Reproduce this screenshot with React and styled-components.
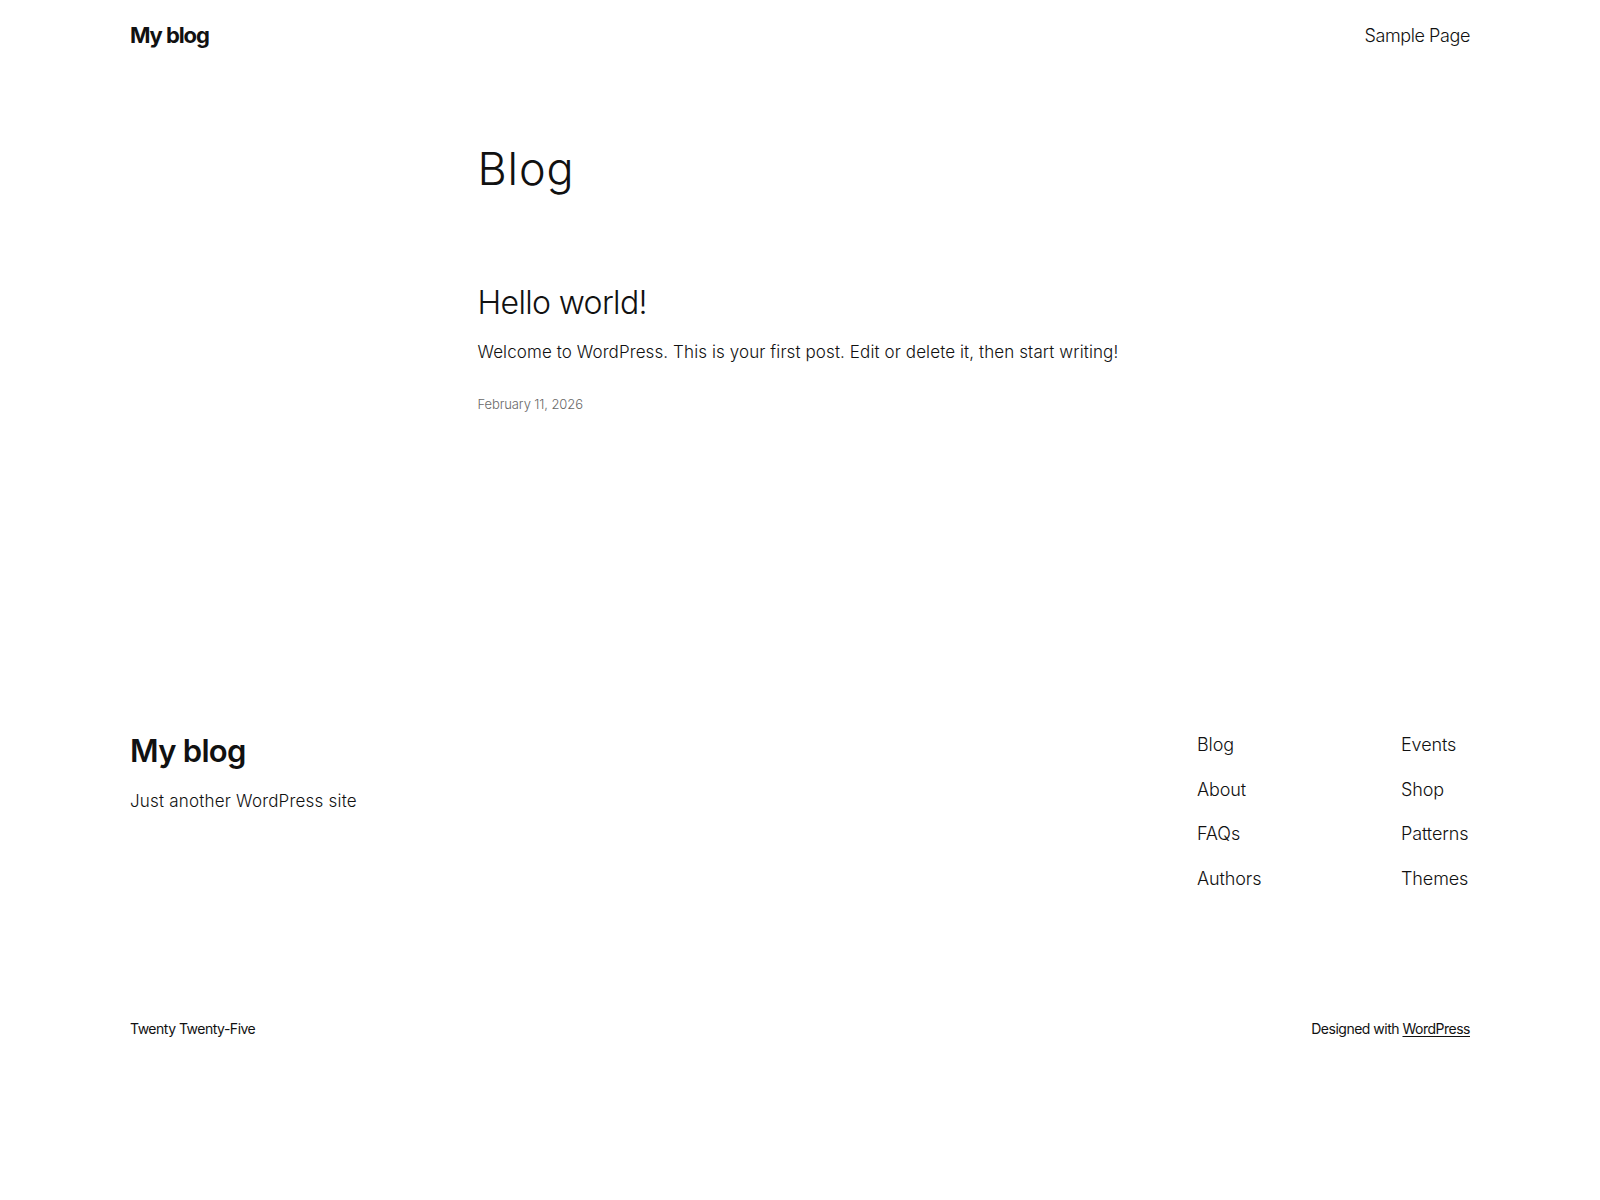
import styled, { createGlobalStyle } from 'styled-components';

const GlobalStyle = createGlobalStyle`
  html, body {
    margin: 0;
    padding: 0;
    background: #ffffff;
  }
  body {
    font-family: Inter, "Noto Sans", "Liberation Sans", sans-serif;
    font-weight: 300;
    color: #111111;
    -webkit-font-smoothing: antialiased;
  }
  a {
    color: inherit;
    text-decoration: none;
  }
`;

const Page = styled.div`
  min-height: 1200px;
  display: flex;
  flex-direction: column;
`;

const Header = styled.header`
  width: 1340px;
  margin: 0 auto;
  padding: 20px 0;
  display: flex;
  justify-content: space-between;
  align-items: center;
`;

const SiteTitle = styled.a`
  font-size: 22px;
  line-height: 30px;
  font-weight: 700;
  letter-spacing: -1.1px;
`;

const HeaderLink = styled.a`
  font-size: 18px;
  line-height: 25px;
  font-weight: 300;
  letter-spacing: -0.4px;
`;

const Main = styled.main`
  width: 645px;
  margin: 75px auto 0;
`;

const PageTitle = styled.h1`
  margin: 0;
  font-size: 45px;
  line-height: 48px;
  font-weight: 300;
  letter-spacing: 0.9px;
`;

const Post = styled.article`
  margin-top: 91px;
  display: flex;
  flex-direction: column;
`;

const PostTitle = styled.h2`
  margin: 0;
  font-size: 32px;
  line-height: 38px;
  font-weight: 300;
  letter-spacing: -0.65px;
`;

const Excerpt = styled.p`
  margin: 18px 0 0;
  font-size: 17px;
  line-height: 24px;
  letter-spacing: 0.1px;
`;

const PostDate = styled.time`
  margin-top: 31px;
  font-size: 13px;
  line-height: 18px;
  color: #686868;
  letter-spacing: -0.1px;
`;

const Footer = styled.footer`
  width: 1340px;
  margin: 319px auto 0;
  padding-bottom: 60px;
`;

const FooterTop = styled.div`
  display: flex;
  justify-content: space-between;
  align-items: flex-start;
`;

const Brand = styled.div`
  display: flex;
  flex-direction: column;
  gap: 20px;
  padding-top: 1px;
`;

const FooterTitle = styled.a`
  font-size: 31px;
  line-height: 36px;
  font-weight: 600;
  letter-spacing: -0.7px;
`;

const Tagline = styled.p`
  margin: 0;
  font-size: 17px;
  line-height: 24px;
  letter-spacing: 0.2px;
`;

const FooterNav = styled.nav`
  display: grid;
  grid-template-columns: 204px 69px;
`;

const NavColumn = styled.div`
  display: flex;
  flex-direction: column;
  gap: 19.5px;
`;

const FooterLink = styled.a`
  font-size: 18px;
  line-height: 25px;
  letter-spacing: -0.1px;
  white-space: nowrap;
`;

const FooterBottom = styled.div`
  margin-top: 128px;
  display: flex;
  justify-content: space-between;
  font-size: 14px;
  line-height: 20px;
  font-weight: 400;
  letter-spacing: -0.5px;
`;

const Credit = styled.a`
  text-decoration: underline;
  text-decoration-thickness: 1px;
  text-underline-offset: 2px;
`;

const navColumns = [
  ['Blog', 'About', 'FAQs', 'Authors'],
  ['Events', 'Shop', 'Patterns', 'Themes'],
];

export default function App() {
  return (
    <Page>
      <GlobalStyle />
      <Header>
        <SiteTitle href="#">My blog</SiteTitle>
        <HeaderLink href="#">Sample Page</HeaderLink>
      </Header>

      <Main>
        <PageTitle>Blog</PageTitle>
        <Post>
          <PostTitle>Hello world!</PostTitle>
          <Excerpt>
            Welcome to WordPress. This is your first post. Edit or delete it, then start writing!
          </Excerpt>
          <PostDate>February 11, 2026</PostDate>
        </Post>
      </Main>

      <Footer>
        <FooterTop>
          <Brand>
            <FooterTitle href="#">My blog</FooterTitle>
            <Tagline>Just another WordPress site</Tagline>
          </Brand>
          <FooterNav>
            {navColumns.map((col, i) => (
              <NavColumn key={i}>
                {col.map((label) => (
                  <FooterLink key={label} href="#">{label}</FooterLink>
                ))}
              </NavColumn>
            ))}
          </FooterNav>
        </FooterTop>
        <FooterBottom>
          <span>Twenty Twenty-Five</span>
          <span>
            Designed with <Credit href="#">WordPress</Credit>
          </span>
        </FooterBottom>
      </Footer>
    </Page>
  );
}
